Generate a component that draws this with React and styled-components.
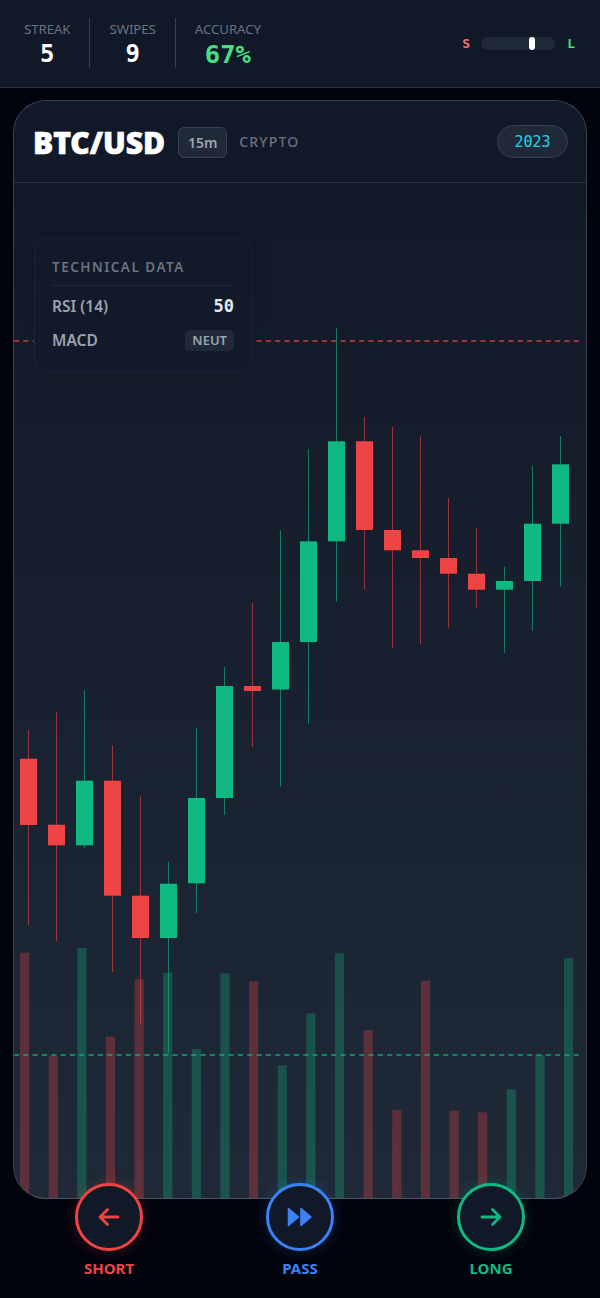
import React from 'react';
import styled, { createGlobalStyle } from 'styled-components';

const Global = createGlobalStyle`
  html, body { margin: 0; padding: 0; background: #02040d; }
  * { box-sizing: border-box; }
`;
const SANS = `"Noto Sans", "Open Sans", sans-serif`;
const MONO = `"DejaVu Sans Mono", "Liberation Mono", monospace`;

const candles = [
  ['r', 730, 925, 758.7, 825], ['r', 712, 941, 824.7, 845.3], ['g', 690, 848, 780.7, 845.3],
  ['r', 745, 972, 780.7, 895.7], ['r', 796, 1023, 895.7, 938], ['g', 862, 1053, 883.7, 938],
  ['g', 728, 913, 798, 883.3], ['g', 667, 815, 686, 798], ['r', 603, 747, 686, 691],
  ['g', 530, 787, 642, 689.5], ['g', 449, 724, 541.3, 642], ['g', 328, 601.7, 441.3, 541.3],
  ['r', 417, 589.7, 441.3, 530], ['r', 426.7, 648, 530, 550.3], ['r', 436.7, 644, 550.3, 558],
  ['r', 498, 627.7, 558, 573.7], ['r', 528, 607.7, 573.7, 589.7], ['g', 566.7, 653, 581, 589.7],
  ['g', 465.7, 630.7, 523.7, 581], ['g', 436, 586.7, 464.3, 523.7],
];
const volumes = [
  ['r', 952.7], ['r', 1055.7], ['g', 948], ['r', 1036.7], ['r', 979.3], ['g', 972.7], ['g', 1049],
  ['g', 973.3], ['r', 981.3], ['g', 1065.3], ['g', 1013.3], ['g', 953.3], ['r', 1030], ['r', 1110],
  ['r', 980.7], ['r', 1110.7], ['r', 1112.3], ['g', 1089.3], ['g', 1055], ['g', 958.3],
];
const RED = '#ef4444';
const GREEN = '#10b981';
const TOP = 183;
const CHART_H = 1199 - TOP;
const col = (k) => (k === 'r' ? RED : GREEN);

const Page = styled.div`
  width: 600px; height: 1298px; display: flex; flex-direction: column;
  background: #02040d; font-family: ${SANS}; overflow: hidden;
`;
const TopBar = styled.header`
  height: 88px; flex: none; display: flex; align-items: center; justify-content: space-between;
  padding: 0 24px 1px; background: #111827; border-bottom: 1px solid #293241;
`;
const Stats = styled.div`display: flex; align-items: stretch;`;
const Stat = styled.div`
  display: flex; flex-direction: column; align-items: center; padding: 0 19px;
  border-left: 1px solid #374151; height: 50px;
  &:first-child { border-left: 0; padding-left: 0; }
`;
const StatLabel = styled.span`font-size: 13.3px; line-height: 21px; color: #6b7280; letter-spacing: -0.1px; padding-top: 1px;`;
const StatValue = styled.span`
  font-family: ${MONO}; font-weight: 700; font-size: ${p => p.$big ? 25.5 : 24}px; line-height: 28px;
  color: ${p => p.$color || '#ffffff'};
`;
const Bias = styled.div`display: flex; align-items: center; margin-right: 1px;`;
const BiasLetter = styled.span`
  font-family: ${MONO}; font-weight: 700; font-size: 13px; color: ${p => p.$color};
`;
const BiasTrack = styled.div`
  position: relative; width: 74px; height: 13px; border-radius: 7px; background: #1f2937; margin: 0 12px 0 11px;
`;
const BiasKnob = styled.div`
  position: absolute; left: 48px; top: 0; width: 6px; height: 13px; border-radius: 3px; background: #fff;
`;
const Main = styled.main`flex: 1; padding: 12px 13px 0; min-height: 0; display: flex;`;
const Card = styled.section`
  position: relative; flex: 1; display: flex; flex-direction: column; overflow: hidden;
  border: 1px solid #374151; border-bottom-color: #4b5563; border-radius: 33px;
  background: linear-gradient(180deg, #111827 0%, #1f2937 100%);
`;
const CardHead = styled.div`
  height: 82px; flex: none; display: flex; align-items: center; padding: 0 18px 0 19px;
  border-bottom: 1px solid #263040;
`;
const Pair = styled.h1`
  margin: 2px 13px 0 0; font-size: 30px; font-weight: 900; color: #fff; -webkit-text-stroke: 0.7px #fff;
`;
const Tf = styled.span`
  height: 31px; width: 49px; margin: 1px 12px 0 0; display: flex; align-items: center; justify-content: center;
  border: 1px solid #374151; background: #1f2937; border-radius: 6px;
  font-size: 14px; font-weight: 600; color: #9ca3af;
`;
const Market = styled.span`font-size: 14px; font-weight: 500; letter-spacing: 1.2px; color: #6b7280;`;
const Year = styled.span`
  margin-left: auto; height: 33px; width: 71px; display: flex; align-items: center; justify-content: center;
  border: 1px solid #374151; border-radius: 17px; background: #1f2937;
  font-family: ${MONO}; font-size: 15px; color: #22d3ee;
`;
const ChartBox = styled.div`position: relative; flex: 1; min-height: 0;`;
const ChartSvg = styled.svg`position: absolute; left: 0; top: 0; display: block;`;
const Panel = styled.aside`
  position: absolute; left: 20px; top: 55px; width: 218px; height: 134px;
  padding: 17px 17px 0; border-radius: 12px; border: 1px solid rgba(255,255,255,0.035);
  background: #121a2a; box-shadow: 0 4px 24px rgba(0,0,0,0.12);
`;
const PanelTitle = styled.div`
  font-size: 13.5px; font-weight: 600; letter-spacing: 1.5px; color: #6b7280; line-height: 22px;
  padding-bottom: 7px; border-bottom: 1px solid #1f2937; margin-bottom: 8px; white-space: nowrap;
`;
const PanelRow = styled.div`
  display: flex; align-items: center; justify-content: space-between; height: 24px; margin-bottom: 10px;
`;
const PanelKey = styled.span`font-size: 15.5px; font-weight: 600; color: #9ca3af;`;
const PanelNum = styled.span`font-family: ${MONO}; font-weight: 700; font-size: 17px; color: #e5e7eb;`;
const PanelChip = styled.span`
  font-size: 13px; font-weight: 600; color: #9ca3af; background: #1f2937; padding: 0 7px; border-radius: 5px;
  height: 21px; display: flex; align-items: center;
`;
const Actions = styled.footer`
  position: relative; z-index: 2; flex: none; height: 115px; margin-top: -16px;
  display: grid; grid-template-columns: repeat(3, 68px); justify-content: center; column-gap: 123px;
`;
const Action = styled.div`display: flex; flex-direction: column; align-items: center; gap: 7px;`;
const Round = styled.button`
  width: 68px; height: 68px; padding: 0; border-radius: 50%; display: flex; align-items: center; justify-content: center;
  border: 3px solid ${p => p.$c}; background: #111827; color: ${p => p.$c};
  box-shadow: 0 0 14px ${p => p.$c}40;
`;
const ActionLabel = styled.span`font-size: 15px; font-weight: 700; color: ${p => p.$c}; line-height: 20px;`;

const PassIcon = () => (
  <svg width="26" height="20" viewBox="0 0 26 20" fill="currentColor" stroke="currentColor" strokeWidth="1.6" strokeLinejoin="round">
    <path d="M1.5 1.5 L11.5 10 L1.5 18.5 Z" />
    <path d="M14 1.5 L24 10 L14 18.5 Z" />
  </svg>
);
const ArrowIcon = ({ right }) => (
  <svg width="24" height="20" viewBox="0 0 24 20" fill="none" stroke="currentColor" strokeWidth="2.8" strokeLinecap="round" strokeLinejoin="round">
    {right
      ? <path d="M3 10 H21 M13.5 2.5 L21 10 L13.5 17.5" />
      : <path d="M21 10 H3 M10.5 2.5 L3 10 L10.5 17.5" />}
  </svg>
);

const W = 572;
const Chart = () => (
  <ChartSvg width={W} height={CHART_H} viewBox={`14 ${TOP} ${W} ${CHART_H}`}>
    {volumes.map(([k, y], i) => (
      <rect key={i} x={20 + i * 28.63} y={y} width={9.2} height={1199 - y} fill={col(k)} opacity={0.3} />
    ))}
    <line x1="14" x2="582" y1="341" y2="341" stroke={RED} strokeOpacity="0.85" strokeWidth="1.4" strokeDasharray="5 4.33" />
    <line x1="14" x2="582" y1="1055" y2="1055" stroke={GREEN} strokeOpacity="0.85" strokeWidth="1.4" strokeDasharray="5 4.33" />
    {candles.map(([k, wt, wb, bt, bb], i) => {
      const x = 20 + i * 28;
      return (
        <g key={i}>
          <line x1={x + 8.5} x2={x + 8.5} y1={wt} y2={wb} stroke={col(k)} strokeOpacity="0.6" />
          <rect x={x} y={bt} width={17} height={bb - bt} fill={col(k)} />
        </g>
      );
    })}
  </ChartSvg>
);

export default function App() {
  return (
    <Page>
      <Global />
      <TopBar>
        <Stats>
          <Stat><StatLabel>STREAK</StatLabel><StatValue>5</StatValue></Stat>
          <Stat><StatLabel>SWIPES</StatLabel><StatValue>9</StatValue></Stat>
          <Stat><StatLabel>ACCURACY</StatLabel><StatValue $big $color="#4ade80">67%</StatValue></Stat>
        </Stats>
        <Bias>
          <BiasLetter $color="#f87171">S</BiasLetter>
          <BiasTrack><BiasKnob /></BiasTrack>
          <BiasLetter $color="#4ade80">L</BiasLetter>
        </Bias>
      </TopBar>
      <Main>
        <Card>
          <CardHead>
            <Pair>BTC/USD</Pair>
            <Tf>15m</Tf>
            <Market>CRYPTO</Market>
            <Year>2023</Year>
          </CardHead>
          <ChartBox>
            <Chart />
            <Panel>
              <PanelTitle>TECHNICAL DATA</PanelTitle>
              <PanelRow><PanelKey>RSI (14)</PanelKey><PanelNum>50</PanelNum></PanelRow>
              <PanelRow><PanelKey>MACD</PanelKey><PanelChip>NEUT</PanelChip></PanelRow>
            </Panel>
          </ChartBox>
        </Card>
      </Main>
      <Actions>
        <Action>
          <Round $c="#ef4444"><ArrowIcon /></Round>
          <ActionLabel $c="#ef4444">SHORT</ActionLabel>
        </Action>
        <Action>
          <Round $c="#3b82f6"><PassIcon /></Round>
          <ActionLabel $c="#3b82f6">PASS</ActionLabel>
        </Action>
        <Action>
          <Round $c="#10b981"><ArrowIcon right /></Round>
          <ActionLabel $c="#10b981">LONG</ActionLabel>
        </Action>
      </Actions>
    </Page>
  );
}
